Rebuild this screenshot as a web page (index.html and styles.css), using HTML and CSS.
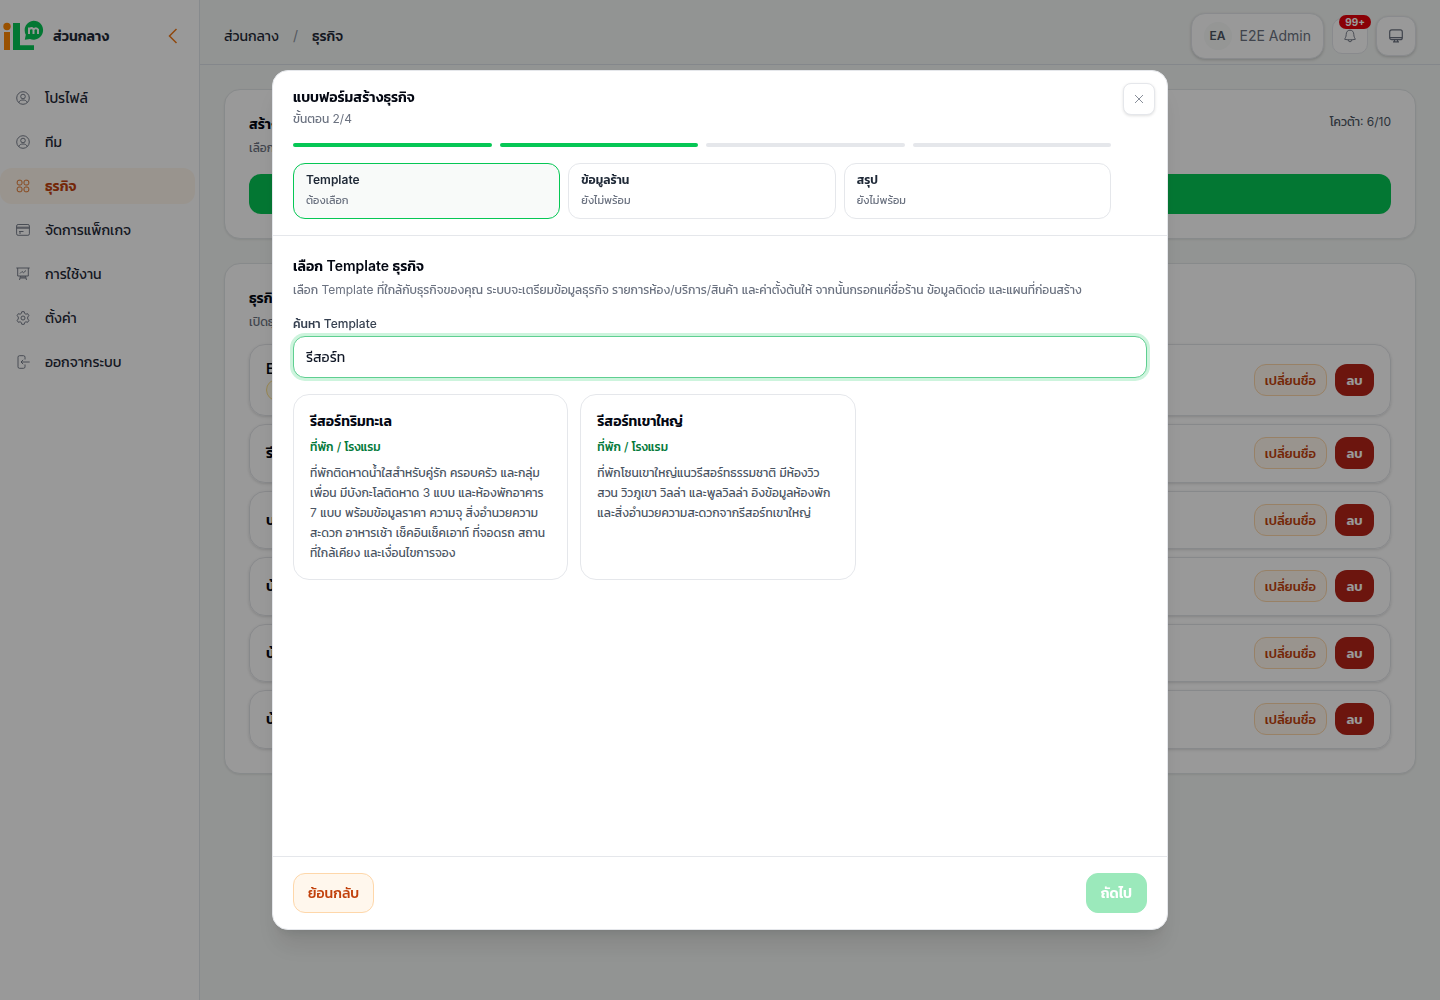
FILE: index.html
```html
<!DOCTYPE html>
<html lang="th">
<head>
<meta charset="utf-8">
<meta name="viewport" content="width=device-width, initial-scale=1">
<title>ธุรกิจ</title>
<link rel="stylesheet" href="styles.css">
</head>
<body>
<div class="app">
  <aside class="sidebar">
    <div class="brand">
      <svg class="logo" viewBox="0 0 40 32" aria-hidden="true">
        <circle cx="4" cy="6.500" r="3.700" fill="#ff8800"/>
        <rect x="1" y="12" width="6" height="18" fill="#ff8800"/>
        <path d="M10 3h7v22.300h14V30H10z" fill="#06c755"/>
        <path d="M30.500 .7a9.500 9.500 0 1 1-3.500 18.300L21.800 19.700l1-5A9.500 9.500 0 0 1 30.500 .7z" fill="#06c755"/>
        <path d="M26 14V7.500M26 9.500q2-2.500 4.500-.5v5M30.500 9.500q2.500-2.500 4.500 0V14" fill="none" stroke="#fff" stroke-width="2"/>
      </svg>
      <strong class="brand-name">ส่วนกลาง</strong>
      <button class="collapse" type="button" aria-label="ย่อเมนู">
        <svg viewBox="0 0 10 16"><path d="M8.500 1 1.500 8l7 7"/></svg>
      </button>
    </div>
    <nav class="menu">
      <a class="menu-item" href="#"><svg class="icon" viewBox="0 0 14 14"><circle cx="7" cy="7" r="6.300"/><circle cx="7" cy="5.500" r="2.300"/><path d="M2.800 11.500c.8-2 2.300-2.500 4.200-2.500s3.400.5 4.200 2.500"/></svg>โปรไฟล์</a>
      <a class="menu-item" href="#"><svg class="icon" viewBox="0 0 14 14"><circle cx="7" cy="7" r="6.300"/><circle cx="7" cy="5.500" r="2.300"/><path d="M2.800 11.500c.8-2 2.300-2.500 4.200-2.500s3.400.5 4.200 2.500"/></svg>ทีม</a>
      <a class="menu-item active" href="#" aria-current="page"><svg class="icon" viewBox="0 0 14 14"><rect x="1.200" y="1.200" width="4.800" height="4.800" rx="1.800"/><rect x="8" y="1.200" width="4.800" height="4.800" rx="1.800"/><rect x="1.200" y="8" width="4.800" height="4.800" rx="1.800"/><rect x="8" y="8" width="4.800" height="4.800" rx="1.800"/></svg>ธุรกิจ</a>
      <a class="menu-item" href="#"><svg class="icon" viewBox="0 0 14 14"><rect x=".6" y="1.500" width="12.800" height="10.800" rx="1.500"/><path d="M.6 4.200h12.800M.6 5.200h12.800M3 8.500h4.500M3 10h2"/></svg>จัดการแพ็กเกจ</a>
      <a class="menu-item" href="#"><svg class="icon" viewBox="0 0 14 14"><path d="M.3 1h13.400M1.700 1v8h10.600V1M4 6.500l2-2 1.500 1.200L10 3.500M4.500 9l-1 4M9.500 9l1 4M4 11h6M5 10h4"/></svg>การใช้งาน</a>
      <a class="menu-item" href="#"><svg class="icon" viewBox="0 0 14 14"><path d="M5.800.7h2.400l.5 1.800 1.200.7 1.800-.5 1.200 2L11.700 6v2l1.200 1.300-1.200 2-1.800-.5-1.200.7-.5 1.800H5.800l-.5-1.800-1.200-.7-1.800.5-1.200-2L2.300 8V6L1.100 4.700l1.200-2 1.800.5 1.200-.7z"/><circle cx="7" cy="7" r="2"/></svg>ตั้งค่า</a>
      <a class="menu-item" href="#"><svg class="icon" viewBox="0 0 14 14"><path d="M9 4.500V2.200Q9 .7 7.500.7h-4Q2 .7 2 2.200v9.600q0 1.500 1.500 1.500h4Q9 13.300 9 11.800V9.500M13.700 7H5M7.200 4.800 5 7l2.200 2.200"/></svg>ออกจากระบบ</a>
    </nav>
  </aside>

  <div class="main">
    <header class="topbar">
      <nav class="crumbs" aria-label="เส้นทาง"><a href="#">ส่วนกลาง</a><span class="slash">/</span><strong>ธุรกิจ</strong></nav>
      <div class="tools">
        <button class="user" type="button"><span class="avatar">EA</span>E2E Admin</button>
        <button class="bell" type="button" aria-label="การแจ้งเตือน">
          <svg class="icon" viewBox="0 0 14 14"><path d="M7 1.200C4.500 1.200 3.200 3 3.200 5.500c0 2.500-1.200 3.600-1.500 4.800 3 .7 7.600.7 10.600 0-.3-1.200-1.500-2.300-1.500-4.800C10.800 3 9.500 1.200 7 1.200zM5 10.800q.5 2 2 2t2-2"/></svg>
          <span class="count">99+</span>
        </button>
        <button class="screen" type="button" aria-label="หน้าจอ">
          <svg class="icon" viewBox="0 0 14 14"><rect x=".7" y=".9" width="12.600" height="9.800" rx="2"/><path d="M1 8.700h12M5.500 10.700v2M8.500 10.700v2M4 12.900h6"/></svg>
        </button>
      </div>
    </header>

    <main class="content">
      <section class="panel">
        <div class="panel-head">
          <div><h2 class="title">สร้าง</h2><p class="sub">เลือก</p></div>
          <span class="quota">โควต้า: 6/10</span>
        </div>
        <button class="create" type="button" aria-label="สร้างธุรกิจ"></button>
      </section>
      <section class="panel">
        <div><h2 class="title">ธุรกิจ</h2><p class="sub">เปิดธุ</p></div>
        <ul class="list">
          <li class="row first"><div class="row-name">E2E<span class="tag"></span></div><button class="rename" type="button">เปลี่ยนชื่อ</button><button class="delete" type="button">ลบ</button></li>
          <li class="row"><div class="row-name">รี</div><button class="rename" type="button">เปลี่ยนชื่อ</button><button class="delete" type="button">ลบ</button></li>
          <li class="row"><div class="row-name">บ</div><button class="rename" type="button">เปลี่ยนชื่อ</button><button class="delete" type="button">ลบ</button></li>
          <li class="row"><div class="row-name">บ้</div><button class="rename" type="button">เปลี่ยนชื่อ</button><button class="delete" type="button">ลบ</button></li>
          <li class="row"><div class="row-name">บ้</div><button class="rename" type="button">เปลี่ยนชื่อ</button><button class="delete" type="button">ลบ</button></li>
          <li class="row"><div class="row-name">บ้</div><button class="rename" type="button">เปลี่ยนชื่อ</button><button class="delete" type="button">ลบ</button></li>
        </ul>
      </section>
    </main>
  </div>
</div>

<div class="overlay">
  <div class="modal" role="dialog" aria-modal="true" aria-labelledby="form-title">
    <header class="modal-head">
      <h2 class="title" id="form-title">แบบฟอร์มสร้างธุรกิจ</h2>
      <p class="sub">ขั้นตอน 2/4</p>
      <div class="bars"><i class="bar done"></i><i class="bar done"></i><i class="bar"></i><i class="bar"></i></div>
      <div class="steps">
        <button class="step current" type="button"><b>Template</b><span>ต้องเลือก</span></button>
        <button class="step" type="button"><b>ข้อมูลร้าน</b><span>ยังไม่พร้อม</span></button>
        <button class="step" type="button"><b>สรุป</b><span>ยังไม่พร้อม</span></button>
      </div>
      <button class="close" type="button" aria-label="ปิด"><svg viewBox="0 0 10 10"><path d="m1 1 8 8M9 1 1 9"/></svg></button>
    </header>
    <div class="modal-body">
      <h3 class="title">เลือก Template ธุรกิจ</h3>
      <p class="sub">เลือก Template ที่ใกล้กับธุรกิจของคุณ ระบบจะเตรียมข้อมูลธุรกิจ รายการห้อง/บริการ/สินค้า และค่าตั้งต้นให้ จากนั้นกรอกแค่ชื่อร้าน ข้อมูลติดต่อ และแผนที่ก่อนสร้าง</p>
      <label class="label" for="search">ค้นหา Template</label>
      <input class="search" id="search" type="text" value="รีสอร์ท">
      <div class="cards">
        <button class="card" type="button">
          <b class="card-title">รีสอร์ทริมทะเล</b>
          <span class="card-kind">ที่พัก / โรงแรม</span>
          <span class="card-text">ที่พักติดหาดน้ำใสสำหรับคู่รัก ครอบครัว และกลุ่มเพื่อน มีบังกะโลติดหาด 3 แบบ และห้องพักอาคาร 7 แบบ พร้อมข้อมูลราคา ความจุ สิ่งอำนวยความสะดวก อาหารเช้า เช็คอินเช็คเอาท์ ที่จอดรถ สถานที่ใกล้เคียง และเงื่อนไขการจอง</span>
        </button>
        <button class="card" type="button">
          <b class="card-title">รีสอร์ทเขาใหญ่</b>
          <span class="card-kind">ที่พัก / โรงแรม</span>
          <span class="card-text">ที่พักโซนเขาใหญ่แนวรีสอร์ทธรรมชาติ มีห้องวิวสวน วิวภูเขา วิลล่า และพูลวิลล่า อิงข้อมูลห้องพักและสิ่งอำนวยความสะดวกจากรีสอร์ทเขาใหญ่</span>
        </button>
      </div>
    </div>
    <footer class="modal-foot">
      <button class="back" type="button">ย้อนกลับ</button>
      <button class="next" type="button" disabled>ถัดไป</button>
    </footer>
  </div>
</div>
</body>
</html>
```
FILE: styles.css
```css
* { box-sizing: border-box; }
body {
  margin: 0;
  font: 14px/20px Inter, Kanit, "Noto Sans Thai", sans-serif;
  color: #1f2937;
  background: #f4f7f5;
}
h2, h3, p, ul { margin: 0; padding: 0; }
ul { list-style: none; }
button, input { font: inherit; color: inherit; margin: 0; }
button { cursor: pointer; padding: 0; }
a { color: inherit; text-decoration: none; }
svg { display: block; fill: none; stroke: currentColor; flex: none; }

.app { display: flex; min-height: 100vh; }

.sidebar {
  width: 200px;
  flex: none;
  background: #fff;
  border-right: 1px solid #e2e6ec;
}
.brand { display: flex; align-items: center; height: 72px; padding: 0 16px 0 3px; }
.logo { width: 40px; height: 32px; stroke: none; overflow: visible; }
.brand-name { flex: 1; margin-left: 10px; font-weight: 600; }
.collapse { border: 0; background: none; color: #f07818; padding: 0 5px; }
.collapse svg { width: 10px; height: 16px; stroke-width: 1.5; }
.menu { display: flex; flex-direction: column; gap: 8px; padding: 8px 4px 0 0; }
.menu-item {
  display: flex;
  align-items: center;
  gap: 15px;
  height: 36px;
  padding-left: 16px;
  border-radius: 12px;
}
.icon { width: 14px; height: 14px; color: #6b7280; stroke-width: .9; }
.menu-item.active { background: #fff7ed; color: #c2410c; font-weight: 600; }
.menu-item.active .icon { color: #e0691a; }

.main { flex: 1; min-width: 0; }
.topbar {
  display: flex;
  align-items: center;
  justify-content: space-between;
  height: 65px;
  padding: 7px 24px 0;
  border-bottom: 1px solid #dde1e8;
}
.crumbs { display: flex; gap: 14px; }
.crumbs strong { font-weight: 500; }
.slash { color: #8b93a0; }
.tools { display: flex; align-items: center; gap: 8px; }
.tools button { border: 1px solid #e4e7eb; background: #fff; box-shadow: 0 1px 3px rgba(0,0,0,.18); }
.user {
  display: flex;
  align-items: center;
  gap: 8px;
  height: 46px;
  padding: 0 12px;
  border-radius: 14px;
  color: #6b7280;
}
.avatar {
  width: 28px;
  line-height: 28px;
  border-radius: 50%;
  background: #f8faf9;
  color: #4b5563;
  font-size: 12px;
  font-weight: 600;
}
.tools .bell {
  position: relative;
  display: grid;
  place-items: center;
  width: 36px;
  height: 36px;
  border-radius: 10px;
  box-shadow: none;
}
.count {
  position: absolute;
  top: -4px;
  right: -4px;
  height: 14px;
  padding: 0 6px;
  border-radius: 7px;
  background: #e7000b;
  color: #fff;
  font-size: 10px;
  line-height: 14px;
  font-weight: 700;
}
.screen { display: grid; place-items: center; width: 40px; height: 40px; border-radius: 12px; }
.screen .icon { stroke-width: 1.2; }

.content { display: grid; gap: 24px; padding: 24px; }
.panel {
  padding: 24px;
  background: #fff;
  border: 1px solid #e2e6e8;
  border-radius: 16px;
  box-shadow: 0 1px 2px rgba(0,0,0,.08);
}
.title { font-size: 14px; line-height: 20px; font-weight: 600; color: #030712; }
.sub { margin-top: 4px; font-size: 12px; line-height: 20px; color: #6b7280; }
.panel-head { display: flex; justify-content: space-between; }
.quota { font-size: 12px; line-height: 16px; color: #4b5563; }
.create {
  display: block;
  width: 100%;
  height: 40px;
  margin-top: 16px;
  border: 0;
  border-radius: 12px;
  background: #06c755;
}
.list { display: grid; gap: 8px; margin-top: 12px; }
.row {
  display: flex;
  align-items: center;
  gap: 8px;
  padding: 16px;
  line-height: 1.75;
  border: 1px solid #e2e4e8;
  border-radius: 16px;
  box-shadow: 0 1px 3px rgba(0,0,0,.14);
}
.row button { margin: -4px 0; }
.row.first { height: 72px; line-height: 20px; }
.row-name { flex: 1; font-weight: 600; color: #030712; }
.tag {
  display: block;
  width: 60px;
  height: 22px;
  border: 1px solid #fde08a;
  border-radius: 12px;
  background: #fffbeb;
}
.rename {
  height: 32px;
  padding: 0 10px;
  border: 1px solid #fed7aa;
  border-radius: 12px;
  background: #fff7ed;
  color: #c2410c;
  font-size: 13px;
  line-height: 20px;
  font-weight: 500;
}
.delete {
  width: 39px;
  height: 32px;
  border: 0;
  border-radius: 12px;
  background: #b42318;
  color: #fff;
  font-size: 13px;
  line-height: 20px;
  font-weight: 600;
}

.overlay {
  position: fixed;
  inset: 0;
  display: flex;
  align-items: center;
  justify-content: center;
  padding: 16px;
  background: rgba(0,0,0,.4);
}
.modal {
  position: relative;
  display: flex;
  flex-direction: column;
  width: 100%;
  max-width: 896px;
  height: 86vh;
  background: #fff;
  border: 1px solid #e5e7eb;
  border-radius: 16px;
  box-shadow: 0 20px 25px -5px rgba(0,0,0,.1), 0 8px 10px -6px rgba(0,0,0,.1);
}
.modal-head { padding: 16px 56px 16px 20px; border-bottom: 1px solid #e5e7eb; }
.modal-head .sub { margin-top: 2px; }
.bars { display: grid; grid-template-columns: repeat(4, 1fr); gap: 8px; margin-top: 14px; }
.bar { height: 4px; border-radius: 2px; background: #e5e7eb; }
.bar.done { background: #06c755; }
.steps { display: grid; grid-template-columns: repeat(3, 1fr); gap: 8px; margin-top: 16px; }
.step {
  display: flex;
  flex-direction: column;
  gap: 4px;
  height: 56px;
  padding: 8px 12px;
  text-align: left;
  background: #fff;
  border: 1px solid #e5e7eb;
  border-radius: 12px;
  font-size: 12px;
  line-height: 16px;
}
.step b { font-weight: 600; }
.step span { font-size: 11px; line-height: 16px; color: #6b7280; }
.step.current { background: #f8faf9; border-color: #06c755; }
.close {
  position: absolute;
  top: 12px;
  right: 12px;
  display: grid;
  place-items: center;
  width: 32px;
  height: 32px;
  border: 1px solid #e5e7eb;
  border-radius: 8px;
  background: #fff;
  color: #6b7280;
  box-shadow: 0 1px 3px rgba(0,0,0,.12);
}
.close svg { width: 10px; height: 10px; stroke-width: .8; }
.modal-body { flex: 1; min-height: 0; overflow: auto; padding: 20px; }
.label { display: block; margin-top: 16px; font-size: 12px; line-height: 16px; font-weight: 500; color: #374151; }
.search {
  display: block;
  width: 100%;
  height: 42px;
  margin-top: 4px;
  padding: 0 12px;
  border: 1px solid #5fcf91;
  border-radius: 12px;
  outline: 0;
  background: #fff;
  color: #111827;
  box-shadow: 0 0 0 3px #cdf4dd;
}
.cards {
  display: grid;
  grid-template-columns: repeat(3, 1fr);
  gap: 12px;
  margin-top: 16px;
  padding-right: 4px;
}
.card {
  display: flex;
  flex-direction: column;
  padding: 16px;
  text-align: left;
  background: #fff;
  border: 1px solid #e5e7eb;
  border-radius: 16px;
}
.card-title { font-weight: 600; color: #030712; }
.card-kind { margin-top: 8px; font-size: 12px; line-height: 16px; font-weight: 500; color: #047a3b; }
.card-text { margin-top: 8px; font-size: 12px; line-height: 20px; color: #4b5563; }
.modal-foot {
  display: flex;
  justify-content: space-between;
  padding: 16px 20px;
  border-top: 1px solid #e5e7eb;
}
.modal-foot button { height: 40px; padding: 0 14px; border-radius: 12px; font-weight: 500; }
.back { border: 1px solid #fed7aa; background: #fff7ed; color: #c2410c; }
.modal-foot .next { border: 1px solid #9be9bb; background: #9be9bb; color: #fff; font-weight: 600; }
```
